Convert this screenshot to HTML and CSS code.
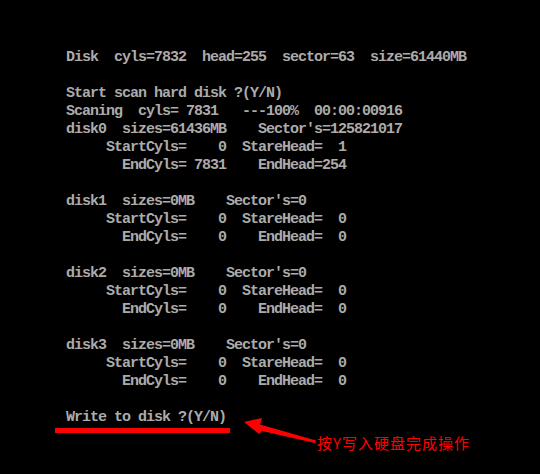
FILE: index.html
```html
<!DOCTYPE html>
<html>
<head>
   <meta http-equiv="Content-Type" content="text/html; charset=UTF-8" />
   <link rel="stylesheet" href="styles.css">
</head>
<body>

<div id="screen">
<pre class="console">Disk  cyls=7832  head=255  sector=63  size=61440MB

Start scan hard disk ?(Y/N)
Scaning  cyls= 7831   ---100%  00:00:00916
disk0  sizes=61436MB    Sector's=125821017
     StartCyls=    0  StareHead=  1
       EndCyls= 7831    EndHead=254

disk1  sizes=0MB    Sector's=0
     StartCyls=    0  StareHead=  0
       EndCyls=    0    EndHead=  0

disk2  sizes=0MB    Sector's=0
     StartCyls=    0  StareHead=  0
       EndCyls=    0    EndHead=  0

disk3  sizes=0MB    Sector's=0
     StartCyls=    0  StareHead=  0
       EndCyls=    0    EndHead=  0

Write to disk ?(Y/N)</pre>
    <div class="underline"></div>

    <svg class="arrow" width="80" height="32" viewBox="240 414 80 32">
        <polygon points="244,422 262,418 260,424.5 316,440.5 315,443 262,431 259,434" fill="#ff0000" />
    </svg>
    <div class="note">按Y写入硬盘完成操作</div>
</div>

</body>
</html>
```

FILE: styles.css
```css
* {
    padding: 0; margin: 0;
}
html, body {
    background-color: #000;
    height: 100%;
    overflow: hidden;
}
div#screen {
    position: relative;
    padding: 49px 0 0 66px;
    height: 100%;
    box-sizing: border-box;
}
pre.console {
    font-family: "Liberation Mono", "DejaVu Sans Mono", monospace;
    font-size: 15px;
    font-weight: bold;
    letter-spacing: -1px;
    line-height: 18px;
    color: #ababab;
    white-space: pre;
}
div.underline {
    width: 175px;
    height: 5px;
    margin: 1px 0 0 -11px;
    background-color: #ff0000;
}
svg.arrow {
    position: absolute;
    left: 240px;
    top: 414px;
}
div.note {
    position: absolute;
    left: 317px;
    top: 434px;
    font-family: "Noto Sans CJK SC", sans-serif;
    font-size: 15px;
    line-height: 18px;
    letter-spacing: 1px;
    color: #ff0000;
    white-space: nowrap;
}
```
